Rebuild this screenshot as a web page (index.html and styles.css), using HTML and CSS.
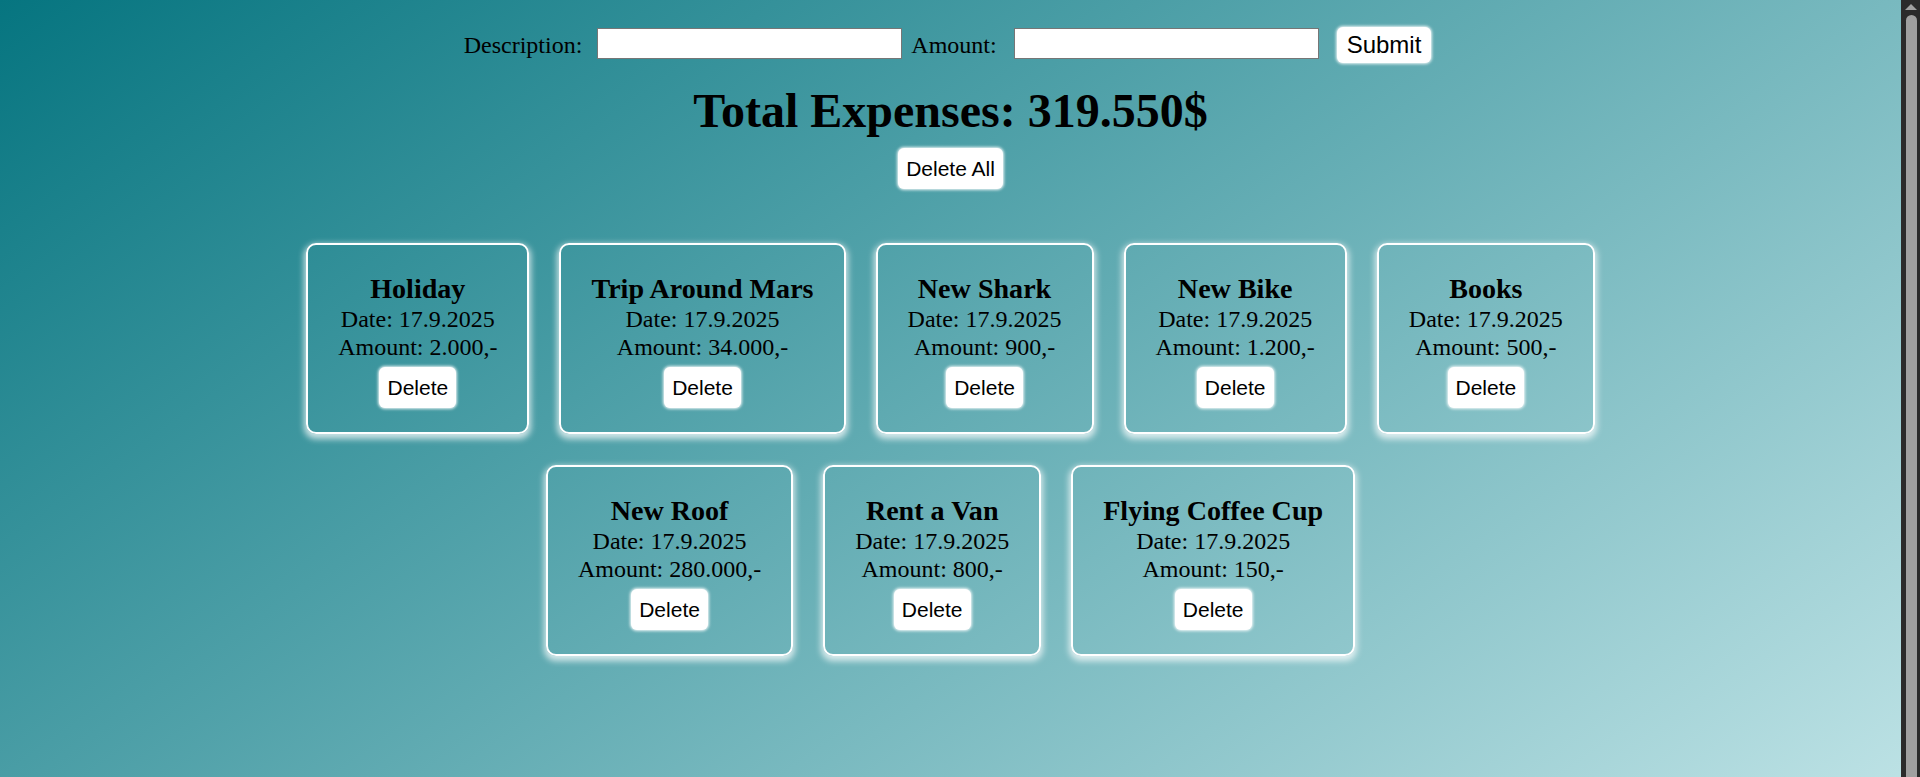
FILE: index.html
```html
<!DOCTYPE html>
<html lang="en">
<head>
<meta charset="utf-8">
<title>Expenses</title>
<link rel="stylesheet" href="styles.css">
</head>
<body>
  <form class="entry">
    <label class="entry-label entry-label--desc" for="desc">Description:</label>
    <input id="desc" class="entry-input entry-input--desc" type="text">
    <label class="entry-label entry-label--amount" for="amt">Amount:</label>
    <input id="amt" class="entry-input entry-input--amount" type="text">
    <button class="btn btn-submit" type="button">Submit</button>
  </form>

  <h1 class="total">Total Expenses: 319.550$</h1>

  <div class="actions">
    <button class="btn btn-delete" type="button">Delete All</button>
  </div>

  <div class="cards">
    <div class="card">
      <h3 class="card-title">Holiday</h3>
      <p class="card-line">Date: 17.9.2025</p>
      <p class="card-line">Amount: 2.000,-</p>
      <button class="btn btn-delete card-btn" type="button">Delete</button>
    </div>
    <div class="card">
      <h3 class="card-title">Trip Around Mars</h3>
      <p class="card-line">Date: 17.9.2025</p>
      <p class="card-line">Amount: 34.000,-</p>
      <button class="btn btn-delete card-btn" type="button">Delete</button>
    </div>
    <div class="card">
      <h3 class="card-title">New Shark</h3>
      <p class="card-line">Date: 17.9.2025</p>
      <p class="card-line">Amount: 900,-</p>
      <button class="btn btn-delete card-btn" type="button">Delete</button>
    </div>
    <div class="card">
      <h3 class="card-title">New Bike</h3>
      <p class="card-line">Date: 17.9.2025</p>
      <p class="card-line">Amount: 1.200,-</p>
      <button class="btn btn-delete card-btn" type="button">Delete</button>
    </div>
    <div class="card">
      <h3 class="card-title">Books</h3>
      <p class="card-line">Date: 17.9.2025</p>
      <p class="card-line">Amount: 500,-</p>
      <button class="btn btn-delete card-btn" type="button">Delete</button>
    </div>
    <div class="card">
      <h3 class="card-title">New Roof</h3>
      <p class="card-line">Date: 17.9.2025</p>
      <p class="card-line">Amount: 280.000,-</p>
      <button class="btn btn-delete card-btn" type="button">Delete</button>
    </div>
    <div class="card">
      <h3 class="card-title">Rent a Van</h3>
      <p class="card-line">Date: 17.9.2025</p>
      <p class="card-line">Amount: 800,-</p>
      <button class="btn btn-delete card-btn" type="button">Delete</button>
    </div>
    <div class="card">
      <h3 class="card-title">Flying Coffee Cup</h3>
      <p class="card-line">Date: 17.9.2025</p>
      <p class="card-line">Amount: 150,-</p>
      <button class="btn btn-delete card-btn" type="button">Delete</button>
    </div>
  </div>

  <div class="scrollbar" aria-hidden="true">
    <div class="scrollbar-arrow"></div>
    <div class="scrollbar-thumb"></div>
  </div>
</body>
</html>
```

FILE: styles.css
```css
html {
  margin-right: 19px;
}

body {
  margin: 8px;
  min-height: 100vh;
  font-family: "Times New Roman", "Liberation Serif", serif;
  font-size: 24px;
  color: #000;
  background: linear-gradient(145deg, #067580 0%, #bde2e5 100%);
}

/* window scrollbar (the page overflows slightly) */
.scrollbar {
  position: fixed;
  top: 0;
  right: 0;
  width: 19px;
  height: 100vh;
  background: #2b2b2b;
  display: flex;
  flex-direction: column;
  align-items: center;
}

.scrollbar-arrow {
  width: 0;
  height: 0;
  margin: 4px 0 5px 1px;
  border-left: 6px solid transparent;
  border-right: 6px solid transparent;
  border-bottom: 6px solid #a0a0a0;
}

.scrollbar-thumb {
  flex: 1;
  width: 11px;
  margin-left: 1px;
  background: #a0a0a0;
  border-radius: 6px 6px 0 0;
}

/* entry form */
.entry {
  display: flex;
  justify-content: center;
  align-items: center;
  padding: 19px 6px 0 0;
}

.entry-label {
  font-size: 24px;
  line-height: normal;
}

.entry-label--desc {
  margin-right: 15px;
}

.entry-label--amount {
  margin-right: 17px;
}

.entry-input {
  box-sizing: border-box;
  width: 305px;
  height: 31px;
  margin: 0 0 3px 0;
  padding: 1px 2px;
  border: 1px solid #767676;
  border-radius: 0;
  background: #fff;
  font-size: 16px;
}

.entry-input--desc {
  margin-right: 9px;
}

.entry-input--amount {
  margin-right: 18px;
}

/* buttons */
.btn {
  font-family: "Liberation Sans", Arial, sans-serif;
  color: #000;
  background: #fff;
  border: none;
  border-radius: 6px;
  box-shadow: 0 0 3px 1px rgba(255, 255, 255, 0.9);
  cursor: pointer;
}

.btn-submit {
  font-size: 24px;
  line-height: 28px;
  padding: 4px 10px;
}

.btn-delete {
  font-size: 21px;
  line-height: 25px;
  padding: 8px;
}

/* total */
.total {
  margin: 20px 0 0;
  font-size: 48px;
  font-weight: bold;
  text-align: center;
  line-height: normal;
}

.actions {
  display: flex;
  justify-content: center;
  margin-top: 10px;
}

/* expense cards */
.cards {
  display: flex;
  flex-wrap: wrap;
  justify-content: center;
  gap: 31px 30px;
  max-width: 1400px;
  margin: 54px auto 0;
}

.card {
  display: flex;
  flex-direction: column;
  align-items: center;
  text-align: center;
  padding: 28px 30px 24px;
  border: 2px solid #fff;
  border-radius: 10px;
  box-shadow: 0 3px 6px 2px rgba(255, 255, 255, 0.72);
}

.card-title {
  margin: 0;
  font-size: 1.17em;
  font-weight: bold;
  line-height: 32px;
}

.card-line {
  margin: 0;
  line-height: 28px;
}

.card-btn {
  margin-top: 6px;
}
```
